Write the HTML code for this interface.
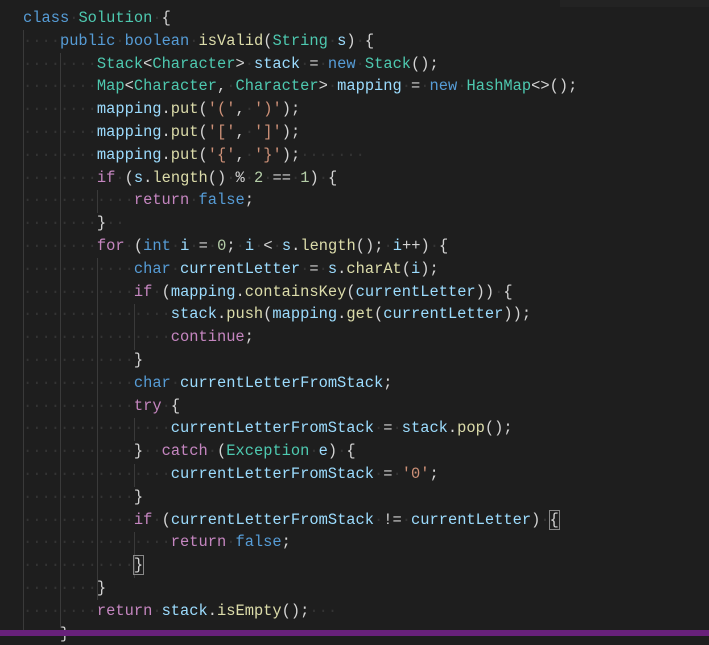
<!DOCTYPE html><html><head><style>
body{margin:0;background:#1e1e1e;width:709px;height:636px;overflow:hidden;position:relative}
pre{margin:0;position:absolute;left:23px;top:7px;font-family:"Liberation Mono",monospace;font-size:15.4px;line-height:22.8px;color:#d4d4d4}
.k{color:#569cd6}.c{color:#c586c0}.t{color:#4ec9b0}.v{color:#9cdcfe}.f{color:#dcdcaa}.s{color:#ce9178}.n{color:#b5cea8}.w{color:#343434}
.g{position:absolute;width:1px;background:#3a3a3a}
.bar{position:absolute;left:0;right:0;bottom:0;height:6px;background:#68217a}
.top{position:absolute;left:560px;right:0;top:0;height:7px;background:#232323}
.m{outline:1px solid #888}
</style></head><body>
<div class="top"></div>
<div class="g" style="left:23px;top:30px;height:606px"></div>
<div class="g" style="left:60px;top:53px;height:575px"></div>
<div class="g" style="left:97px;top:190px;height:23px"></div>
<div class="g" style="left:97px;top:258px;height:342px"></div>
<div class="g" style="left:134px;top:304px;height:46px"></div>
<div class="g" style="left:134px;top:418px;height:23px"></div>
<div class="g" style="left:134px;top:464px;height:23px"></div>
<div class="g" style="left:134px;top:532px;height:46px"></div>
<pre><span class="k">class</span><span class="w">·</span><span class="t">Solution</span><span class="w">·</span>{
<span class="w">····</span><span class="k">public</span><span class="w">·</span><span class="k">boolean</span><span class="w">·</span><span class="f">isValid</span>(<span class="t">String</span><span class="w">·</span><span class="v">s</span>)<span class="w">·</span>{
<span class="w">········</span><span class="t">Stack</span>&lt;<span class="t">Character</span>&gt;<span class="w">·</span><span class="v">stack</span><span class="w">·</span>=<span class="w">·</span><span class="k">new</span><span class="w">·</span><span class="t">Stack</span>();
<span class="w">········</span><span class="t">Map</span>&lt;<span class="t">Character</span>,<span class="w">·</span><span class="t">Character</span>&gt;<span class="w">·</span><span class="v">mapping</span><span class="w">·</span>=<span class="w">·</span><span class="k">new</span><span class="w">·</span><span class="t">HashMap</span>&lt;&gt;();
<span class="w">········</span><span class="v">mapping</span>.<span class="f">put</span>(<span class="s">'('</span>,<span class="w">·</span><span class="s">')'</span>);
<span class="w">········</span><span class="v">mapping</span>.<span class="f">put</span>(<span class="s">'['</span>,<span class="w">·</span><span class="s">']'</span>);
<span class="w">········</span><span class="v">mapping</span>.<span class="f">put</span>(<span class="s">'{'</span>,<span class="w">·</span><span class="s">'}'</span>);<span class="w">·······</span>
<span class="w">········</span><span class="c">if</span><span class="w">·</span>(<span class="v">s</span>.<span class="f">length</span>()<span class="w">·</span>%<span class="w">·</span><span class="n">2</span><span class="w">·</span>==<span class="w">·</span><span class="n">1</span>)<span class="w">·</span>{
<span class="w">············</span><span class="c">return</span><span class="w">·</span><span class="k">false</span>;
<span class="w">········</span>}<span class="w">··</span>
<span class="w">········</span><span class="c">for</span><span class="w">·</span>(<span class="k">int</span><span class="w">·</span><span class="v">i</span><span class="w">·</span>=<span class="w">·</span><span class="n">0</span>;<span class="w">·</span><span class="v">i</span><span class="w">·</span>&lt;<span class="w">·</span><span class="v">s</span>.<span class="f">length</span>();<span class="w">·</span><span class="v">i</span>++)<span class="w">·</span>{
<span class="w">············</span><span class="k">char</span><span class="w">·</span><span class="v">currentLetter</span><span class="w">·</span>=<span class="w">·</span><span class="v">s</span>.<span class="f">charAt</span>(<span class="v">i</span>);
<span class="w">············</span><span class="c">if</span><span class="w">·</span>(<span class="v">mapping</span>.<span class="f">containsKey</span>(<span class="v">currentLetter</span>))<span class="w">·</span>{
<span class="w">················</span><span class="v">stack</span>.<span class="f">push</span>(<span class="v">mapping</span>.<span class="f">get</span>(<span class="v">currentLetter</span>));
<span class="w">················</span><span class="c">continue</span>;
<span class="w">············</span>}
<span class="w">············</span><span class="k">char</span><span class="w">·</span><span class="v">currentLetterFromStack</span>;
<span class="w">············</span><span class="c">try</span><span class="w">·</span>{
<span class="w">················</span><span class="v">currentLetterFromStack</span><span class="w">·</span>=<span class="w">·</span><span class="v">stack</span>.<span class="f">pop</span>();
<span class="w">············</span>}<span class="w">··</span><span class="c">catch</span><span class="w">·</span>(<span class="t">Exception</span><span class="w">·</span><span class="v">e</span>)<span class="w">·</span>{
<span class="w">················</span><span class="v">currentLetterFromStack</span><span class="w">·</span>=<span class="w">·</span><span class="s">'0'</span>;
<span class="w">············</span>}
<span class="w">············</span><span class="c">if</span><span class="w">·</span>(<span class="v">currentLetterFromStack</span><span class="w">·</span>!=<span class="w">·</span><span class="v">currentLetter</span>)<span class="w">·</span><span class="m">{</span>
<span class="w">················</span><span class="c">return</span><span class="w">·</span><span class="k">false</span>;
<span class="w">············</span><span class="m">}</span>
<span class="w">········</span>}
<span class="w">········</span><span class="c">return</span><span class="w">·</span><span class="v">stack</span>.<span class="f">isEmpty</span>();<span class="w">···</span>
<span class="w">····</span>}
</pre>
<div class="bar"></div>
</body></html>
